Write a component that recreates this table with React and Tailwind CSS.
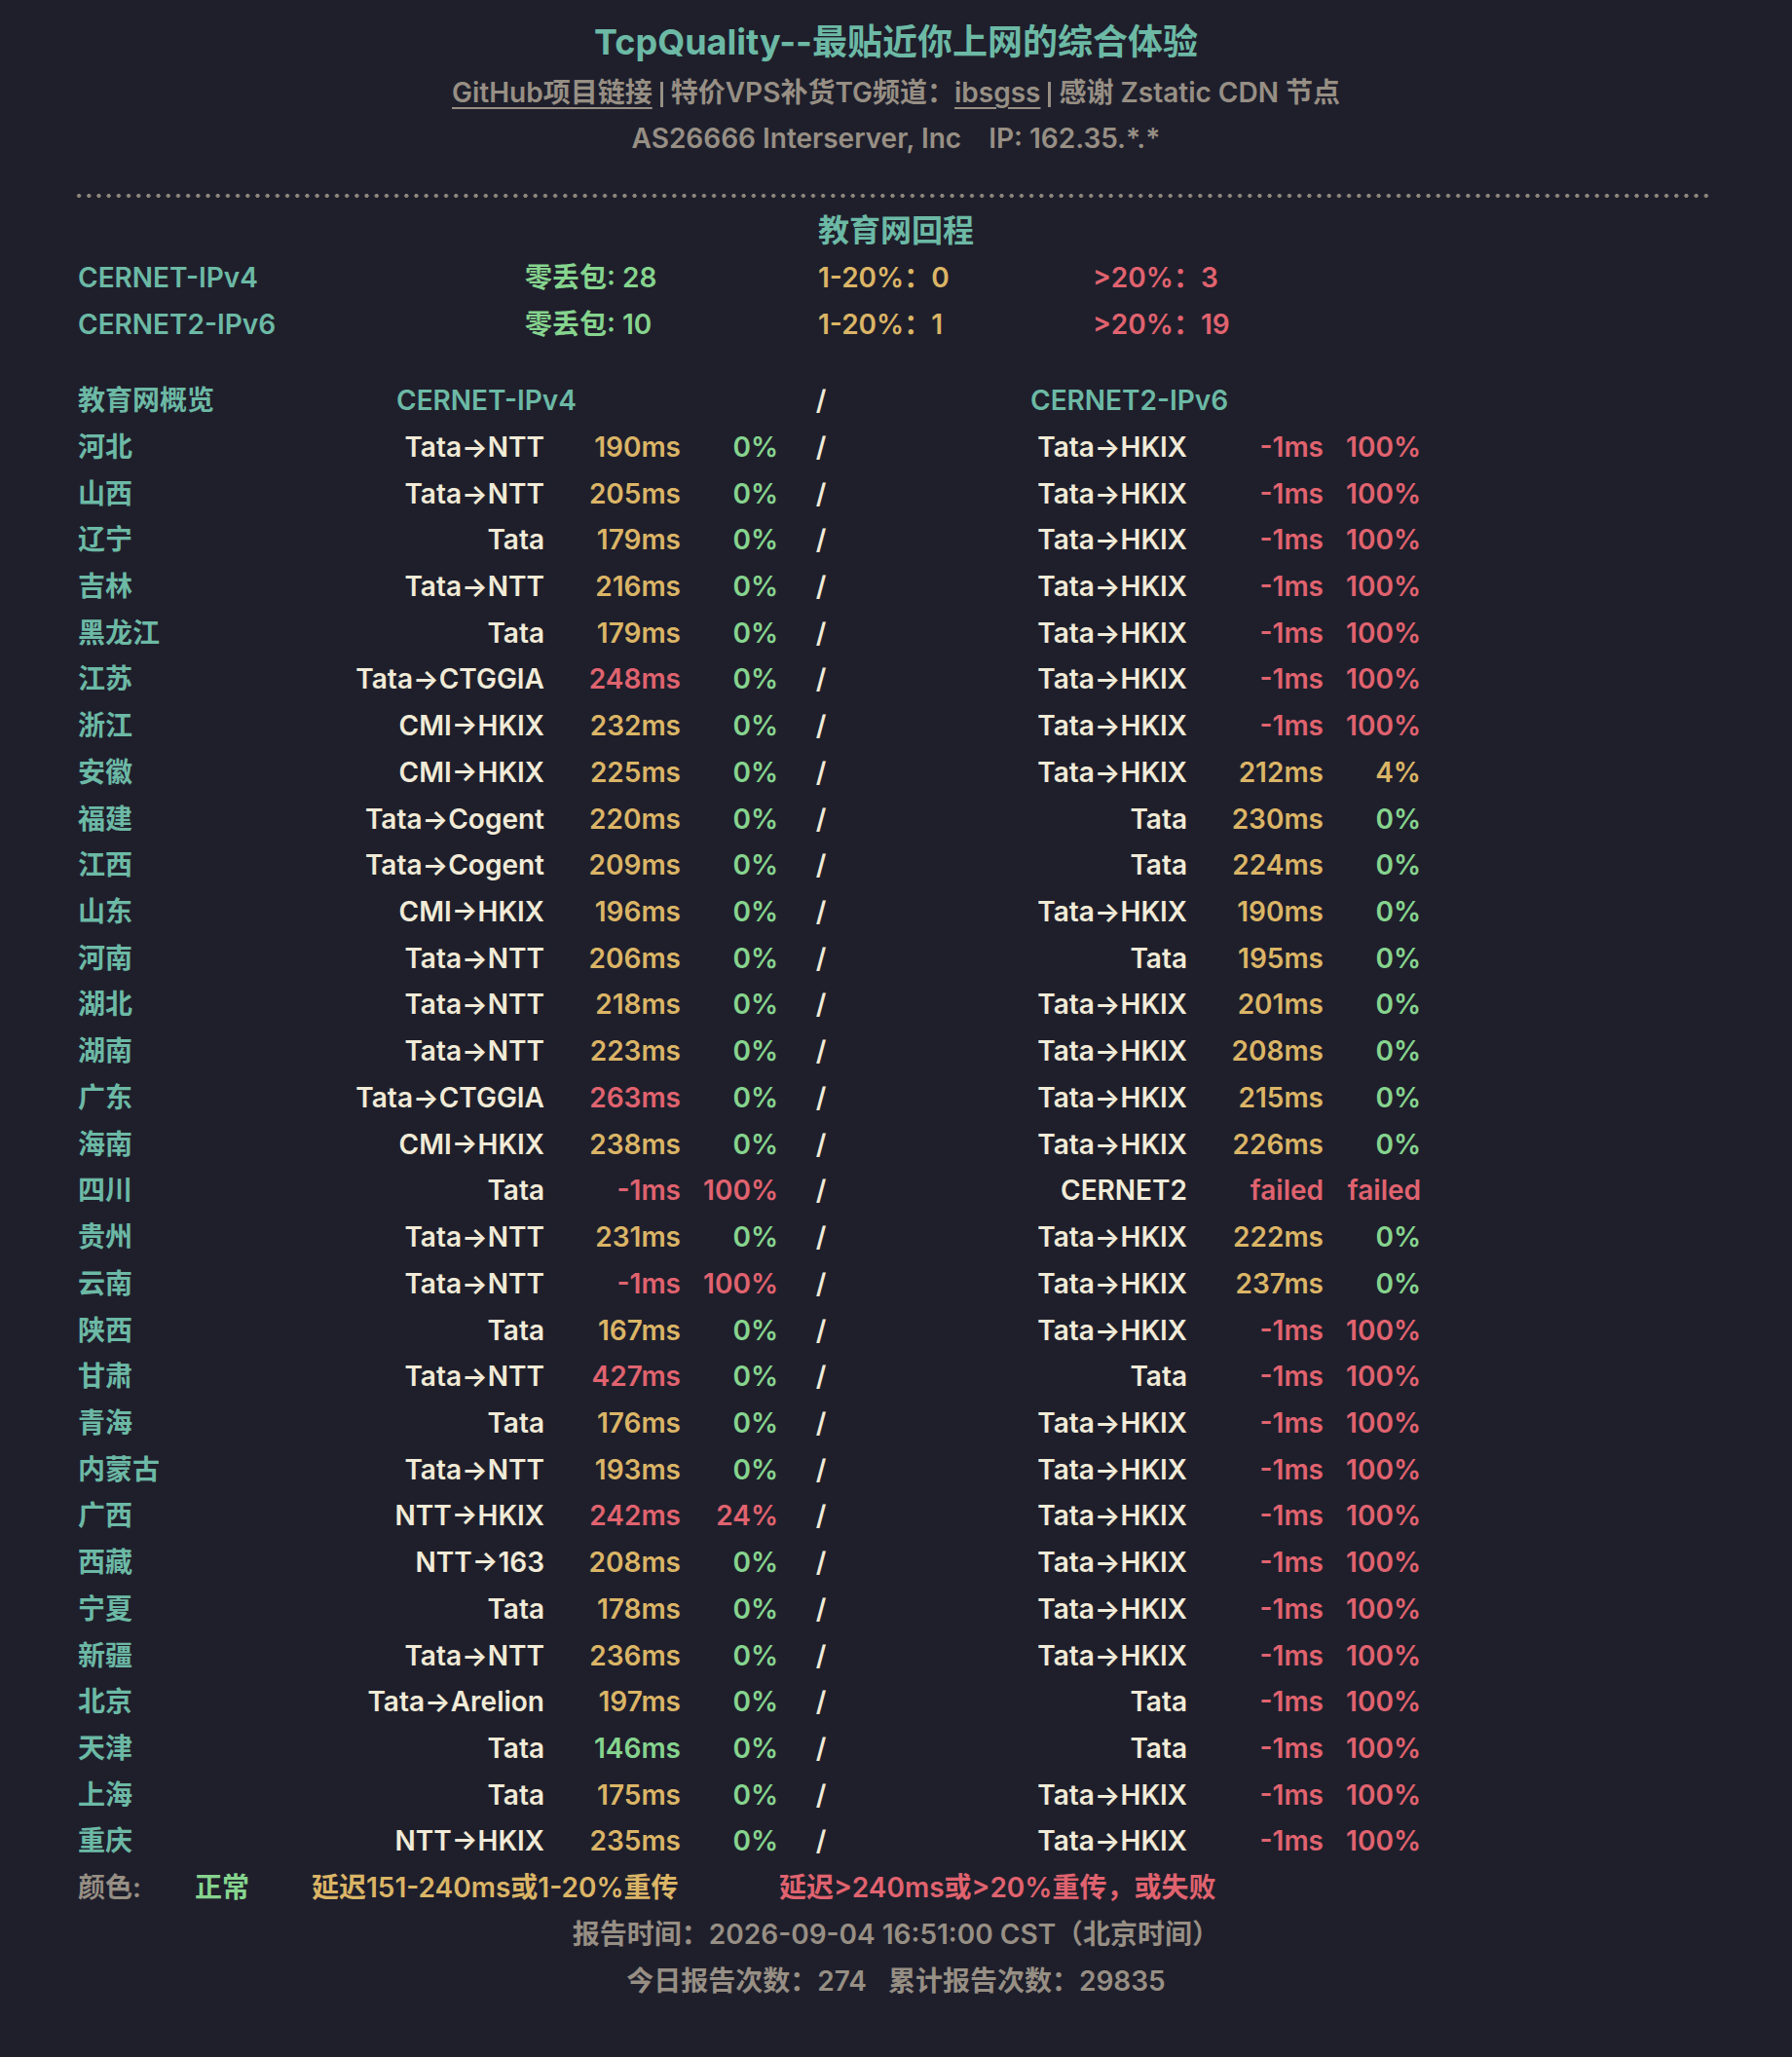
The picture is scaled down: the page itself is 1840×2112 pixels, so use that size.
const rows = [
  ["河北", "Tata→NTT", 190, "0%", "Tata→HKIX", -1, "100%"],
  ["山西", "Tata→NTT", 205, "0%", "Tata→HKIX", -1, "100%"],
  ["辽宁", "Tata", 179, "0%", "Tata→HKIX", -1, "100%"],
  ["吉林", "Tata→NTT", 216, "0%", "Tata→HKIX", -1, "100%"],
  ["黑龙江", "Tata", 179, "0%", "Tata→HKIX", -1, "100%"],
  ["江苏", "Tata→CTGGIA", 248, "0%", "Tata→HKIX", -1, "100%"],
  ["浙江", "CMI→HKIX", 232, "0%", "Tata→HKIX", -1, "100%"],
  ["安徽", "CMI→HKIX", 225, "0%", "Tata→HKIX", 212, "4%"],
  ["福建", "Tata→Cogent", 220, "0%", "Tata", 230, "0%"],
  ["江西", "Tata→Cogent", 209, "0%", "Tata", 224, "0%"],
  ["山东", "CMI→HKIX", 196, "0%", "Tata→HKIX", 190, "0%"],
  ["河南", "Tata→NTT", 206, "0%", "Tata", 195, "0%"],
  ["湖北", "Tata→NTT", 218, "0%", "Tata→HKIX", 201, "0%"],
  ["湖南", "Tata→NTT", 223, "0%", "Tata→HKIX", 208, "0%"],
  ["广东", "Tata→CTGGIA", 263, "0%", "Tata→HKIX", 215, "0%"],
  ["海南", "CMI→HKIX", 238, "0%", "Tata→HKIX", 226, "0%"],
  ["四川", "Tata", -1, "100%", "CERNET2", "failed", "failed"],
  ["贵州", "Tata→NTT", 231, "0%", "Tata→HKIX", 222, "0%"],
  ["云南", "Tata→NTT", -1, "100%", "Tata→HKIX", 237, "0%"],
  ["陕西", "Tata", 167, "0%", "Tata→HKIX", -1, "100%"],
  ["甘肃", "Tata→NTT", 427, "0%", "Tata", -1, "100%"],
  ["青海", "Tata", 176, "0%", "Tata→HKIX", -1, "100%"],
  ["内蒙古", "Tata→NTT", 193, "0%", "Tata→HKIX", -1, "100%"],
  ["广西", "NTT→HKIX", 242, "24%", "Tata→HKIX", -1, "100%"],
  ["西藏", "NTT→163", 208, "0%", "Tata→HKIX", -1, "100%"],
  ["宁夏", "Tata", 178, "0%", "Tata→HKIX", -1, "100%"],
  ["新疆", "Tata→NTT", 236, "0%", "Tata→HKIX", -1, "100%"],
  ["北京", "Tata→Arelion", 197, "0%", "Tata", -1, "100%"],
  ["天津", "Tata", 146, "0%", "Tata", -1, "100%"],
  ["上海", "Tata", 175, "0%", "Tata→HKIX", -1, "100%"],
  ["重庆", "NTT→HKIX", 235, "0%", "Tata→HKIX", -1, "100%"],
];

const GREEN = "text-[#86d48e]";
const YELLOW = "text-[#dbb566]";
const RED = "text-[#e0636f]";

function latColor(v) {
  if (typeof v !== "number" || v < 0 || v > 240) return RED;
  if (v > 150) return YELLOW;
  return GREEN;
}

function pctColor(p) {
  const n = parseInt(p, 10);
  if (isNaN(n) || n > 20) return RED;
  if (n > 0) return YELLOW;
  return GREEN;
}

function fmtLat(v) {
  return typeof v === "number" ? v + "ms" : v;
}

function Row({ r }) {
  const [name, route4, lat4, pct4, route6, lat6, pct6] = r;
  return (
    <>
      <div className="h-[47.73px] flex items-center text-[#6cb9a5]">{name}</div>
      <div className="h-[47.73px] flex items-center justify-end text-[#f1ebd7]">{route4}</div>
      <div className={"h-[47.73px] flex items-center justify-end " + latColor(lat4)}>{fmtLat(lat4)}</div>
      <div className={"h-[47.73px] flex items-center justify-end " + pctColor(pct4)}>{pct4}</div>
      <div className="h-[47.73px] flex items-center justify-center text-[#f1ebd7]">/</div>
      <div className="h-[47.73px] flex items-center justify-end text-[#f1ebd7]">{route6}</div>
      <div className={"h-[47.73px] flex items-center justify-end " + latColor(lat6)}>{fmtLat(lat6)}</div>
      <div className={"h-[47.73px] flex items-center justify-end " + pctColor(pct6)}>{pct6}</div>
    </>
  );
}

function Bar() {
  return <span className="inline-block mx-[8px] w-[3px] h-[26px] bg-[#978f84] translate-y-[2px]" />;
}

function Header() {
  return (
    <div className="flex flex-col items-center pt-[19px]">
      <div className="h-[48px] flex items-center text-[36px] font-bold text-[#6cb9a5]">
        TcpQuality--最贴近你上网的综合体验
      </div>
      <div className="mt-[5px] h-[46px] flex items-center text-[28px] font-semibold text-[#978f84]">
        <span className="underline decoration-2 underline-offset-[5px]">GitHub项目链接</span>
        <Bar />
        <span>特价VPS补货TG频道：</span>
        <span className="underline decoration-2 underline-offset-[5px]">ibsgss</span>
        <Bar />
        <span>感谢 Zstatic CDN 节点</span>
      </div>
      <div className="h-[48px] flex items-center text-[28px] font-semibold text-[#978f84]">
        <span>AS26666 Interserver, Inc</span>
        <span className="ml-[28px]">IP: 162.35.*.*</span>
      </div>
    </div>
  );
}

function Summary() {
  return (
    <div className="grid grid-cols-[459px_301px_282px_1fr] pl-[80px] font-semibold text-[28px]">
      <div className="h-[48px] flex items-center text-[#6cb9a5]">CERNET-IPv4</div>
      <div className={"h-[48px] flex items-center " + GREEN}>零丢包: 28</div>
      <div className={"h-[48px] flex items-center " + YELLOW}>1-20%：0</div>
      <div className={"h-[48px] flex items-center " + RED}>&gt;20%：3</div>
      <div className="h-[48px] flex items-center text-[#6cb9a5]">CERNET2-IPv6</div>
      <div className={"h-[48px] flex items-center " + GREEN}>零丢包: 10</div>
      <div className={"h-[48px] flex items-center " + YELLOW}>1-20%：1</div>
      <div className={"h-[48px] flex items-center " + RED}>&gt;20%：19</div>
    </div>
  );
}

export default function App() {
  return (
    <div className="min-h-screen w-[1840px] bg-[#1f1f2c] [font-family:Inter,'Noto_Sans_CJK_SC',sans-serif] pb-[49px]">
      <Header />
      <div className="mt-[33px] ml-[76px] w-[1680px] h-[4px] bg-[radial-gradient(circle,#8d877b_1.8px,transparent_2.3px)] bg-[length:10.2px_4px]" />
      <div className="mt-[10px] h-[48px] flex items-center justify-center text-[32px] font-bold text-[#6cb9a5]">
        教育网回程
      </div>
      <Summary />
      <div className="mt-[30px] pl-[80px] grid grid-cols-[200px_279px_140px_100px_88px_332px_140px_100px] text-[28px] font-semibold">
        <div className="h-[48px] flex items-center text-[#6cb9a5]">教育网概览</div>
        <div className="col-span-3 h-[48px] flex items-center pl-[127px] text-[#6cb9a5]">CERNET-IPv4</div>
        <div className="h-[48px] flex items-center justify-center text-[#f1ebd7]">/</div>
        <div className="col-span-3 h-[48px] flex items-center pl-[171px] text-[#6cb9a5]">CERNET2-IPv6</div>
        {rows.map((r, i) => (
          <Row key={i} r={r} />
        ))}
      </div>
      <div className="h-[48px] pl-[80px] flex items-center text-[28px] font-semibold">
        <span className="w-[120px] text-[#978f84]">颜色:</span>
        <span className={"w-[120px] " + GREEN}>正常</span>
        <span className={"w-[480px] " + YELLOW}>延迟151-240ms或1-20%重传</span>
        <span className={RED}>延迟&gt;240ms或&gt;20%重传，或失败</span>
      </div>
      <div className="h-[48px] flex items-center justify-center text-[28px] font-semibold text-[#978f84]">
        报告时间：2026-09-04 16:51:00 CST（北京时间）
      </div>
      <div className="h-[47px] flex items-center justify-center text-[28px] font-semibold text-[#978f84]">
        <span>今日报告次数：274</span>
        <span className="ml-[22px]">累计报告次数：29835</span>
      </div>
    </div>
  );
}
